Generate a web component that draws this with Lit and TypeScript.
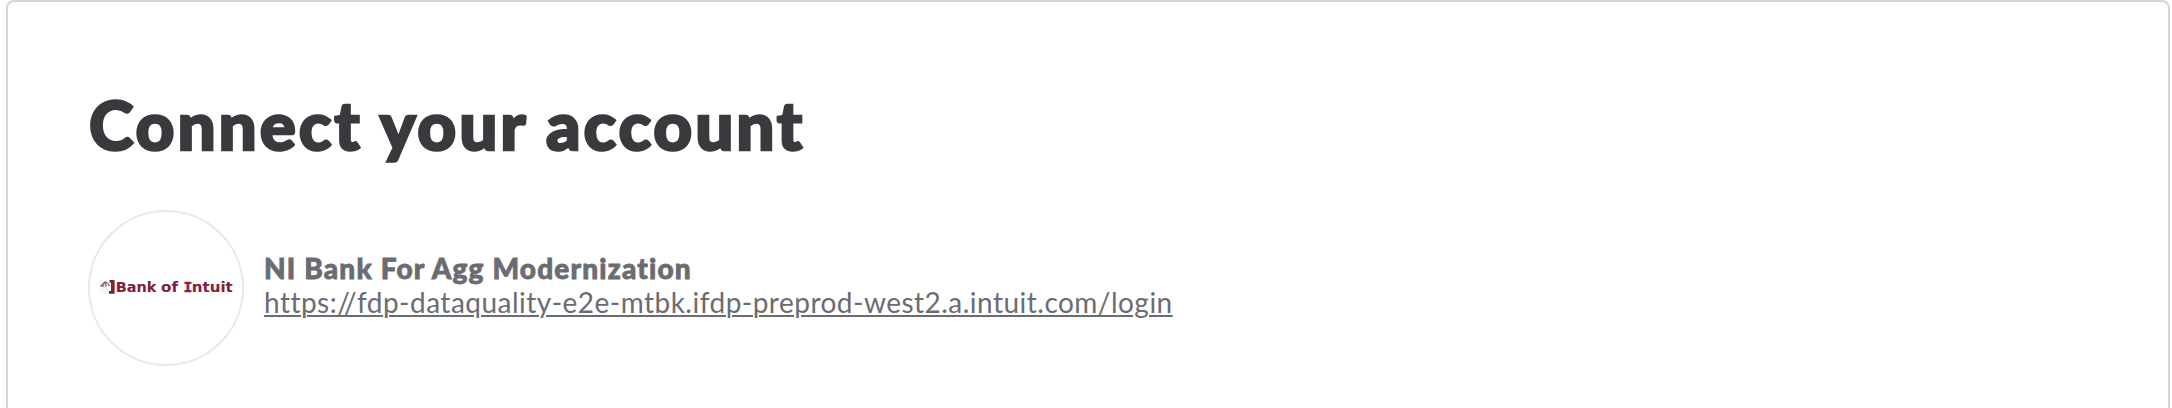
import { LitElement, html, css } from "lit";
import { customElement, property } from "lit/decorators.js";

@customElement("bank-logo")
class BankLogo extends LitElement {
  static styles = css`
    :host {
      display: block;
      box-sizing: border-box;
      flex: none;
      width: 156px;
      height: 156px;
      border: 2px solid #e3e8f2;
      border-radius: 50%;
    }
    svg {
      display: block;
      width: 152px;
      height: 152px;
    }
    .label {
      font: bold 14.6px "DejaVu Sans", sans-serif;
      fill: #7f2038;
    }
    .serif {
      font-family: "DejaVu Sans Mono", monospace;
      stroke: #7f2038;
      stroke-width: 0.5px;
    }
  `;

  render() {
    return html`
      <svg viewBox="0 0 152 152" role="img" aria-label="Bank of Intuit">
        <rect x="10" y="68" width="14" height="14" fill="#f7f7f5" />
        <path d="M19.5 68H24.6V81.7H19V79H21V70.4H19.5Z" fill="#7f2038" />
        <path
          d="M10.5 74.5L15.5 69.5M12.5 75L14 73.2M14.8 72.3L17 70M15.5 74.5L16.4 72.5M17.5 71L19.5 74"
          fill="none"
          stroke="#66535e"
          stroke-width="1.1"
        />
        <text class="label" y="80.3">
          <tspan x="25.8" textLength="40.6" lengthAdjust="spacingAndGlyphs">Bank</tspan>
          <tspan x="71" textLength="17" lengthAdjust="spacingAndGlyphs">of</tspan>
          <tspan class="serif" x="93.6">I</tspan>
          <tspan x="101.8" textLength="41" lengthAdjust="spacingAndGlyphs">ntuit</tspan>
        </text>
      </svg>
    `;
  }
}

@customElement("app-root")
class AppRoot extends LitElement {
  @property() name = "NI Bank For Agg Modernization";
  @property() url = "https://fdp-dataquality-e2e-mtbk.ifdp-preprod-west2.a.intuit.com/login";

  static styles = css`
    :host {
      display: block;
      height: 408px;
      overflow: hidden;
      background: #fff;
      font-family: Lato, sans-serif;
    }
    .card {
      box-sizing: border-box;
      height: 440px;
      margin: 0 2px 0 6px;
      padding: 80px 80px 0;
      border: 2px solid #d4d4da;
      border-radius: 8px;
    }
    .title {
      margin: 0;
      padding-left: 1px;
      font-size: 67.5px;
      line-height: 84px;
      font-weight: 900;
      letter-spacing: 2.85px;
      -webkit-text-stroke: 2.4px #393a3d;
      color: #393a3d;
      white-space: nowrap;
    }
    .bank {
      display: flex;
      align-items: center;
      gap: 20px;
      margin-top: 44px;
    }
    .details {
      display: flex;
      flex-direction: column;
      align-items: flex-start;
      padding-bottom: 6px;
      font-size: 28px;
      line-height: 34px;
      color: #6b6c72;
      white-space: nowrap;
    }
    .name {
      font-weight: 900;
      letter-spacing: 1.17px;
      -webkit-text-stroke: 0.8px #6b6c72;
    }
    .link {
      color: inherit;
      letter-spacing: 0.48px;
      text-decoration: underline;
      text-decoration-thickness: 2px;
      text-underline-offset: 2px;
    }
  `;

  render() {
    return html`
      <section class="card">
        <h1 class="title">Connect your account</h1>
        <div class="bank">
          <bank-logo></bank-logo>
          <div class="details">
            <span class="name">${this.name}</span>
            <a class="link" href=${this.url}>${this.url}</a>
          </div>
        </div>
      </section>
    `;
  }
}
